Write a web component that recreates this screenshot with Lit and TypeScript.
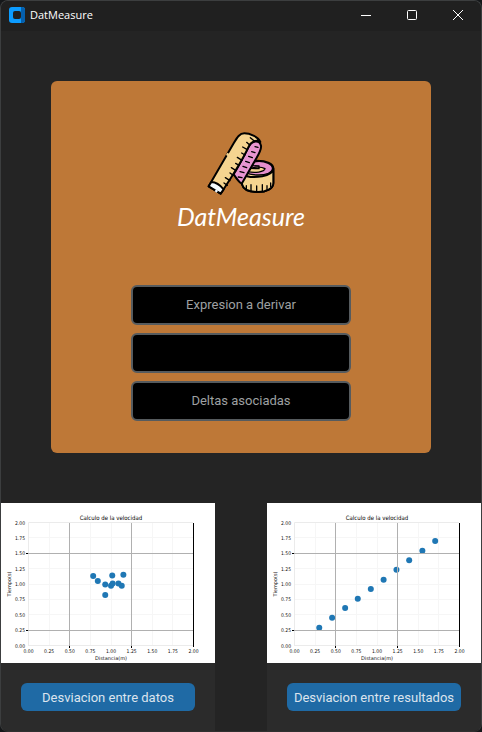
import { LitElement, html, css, svg } from "lit";
import { customElement, property } from "lit/decorators.js";

type Point = [number, number];

const TICKS = [0, 0.25, 0.5, 0.75, 1, 1.25, 1.5, 1.75, 2];

const DATA_POINTS: Point[] = [
  [0.784, 1.13], [0.84, 1.05], [1.015, 1.14], [1.15, 1.15], [0.93, 0.99],
  [1.0, 0.97], [1.02, 1.01], [1.09, 1.01], [1.13, 0.97], [0.93, 0.82],
];

const RESULT_POINTS: Point[] = [
  [0.3, 0.29], [0.456, 0.45], [0.614, 0.61], [0.767, 0.76], [0.925, 0.92],
  [1.08, 1.07], [1.236, 1.23], [1.39, 1.385], [1.55, 1.54], [1.705, 1.7],
];

// Data units to the chart's own drawing units.
const px = (v: number) => 27.5 + v * 82.5;
const py = (v: number) => 142.5 - v * 61.5;

@customElement("scatter-chart")
export class ScatterChart extends LitElement {
  static styles = css`
    :host { display: block; background: #fff; }
    .chart { display: block; width: 100%; height: auto; }
    .label { font: 5px "DejaVu Sans", sans-serif; fill: #111; }
    .tick { font: 5px "DejaVu Sans Condensed", "DejaVu Sans", sans-serif; fill: #111; }
    .title { font: 6px "DejaVu Sans Condensed", "DejaVu Sans", sans-serif; fill: #000; }
    .faint { stroke: #f6f6f6; }
    .grid { stroke: #b0b0b0; }
    .frame { stroke: #ebebeb; }
    .edge { stroke: #000; }
    .dot { fill: #1f77b4; }
  `;

  @property({ attribute: false }) points: Point[] = [];

  render() {
    return html`
      <svg class="chart" viewBox="0 0 214 160" role="img" aria-label="Calculo de la velocidad">
        ${TICKS.slice(1, -1).map((t) => svg`
          <line class="faint" x1=${Math.floor(px(t)) + 0.5} x2=${Math.floor(px(t)) + 0.5} y1="20" y2="142" />
          <line class="faint" x1="28" x2="192" y1=${Math.floor(py(t)) + 0.5} y2=${Math.floor(py(t)) + 0.5} />`)}
        <path class="frame" fill="none" d="M27.5 143V19.5H192M27 142.5H192" />
        ${this.points.map(([x, y]) => svg`<circle class="dot" cx=${px(x)} cy=${py(y)} r="3" />`)}
        <path class="grid" fill="none" d="M68.5 20V143M130.5 20V143M27 50.5H192M27 127.5H192" />
        <path class="edge" fill="none" d="M192.5 20V144M68.5 143v2M130.5 143v2M25 50.5h2M25 127.5h2" />
        <text class="title" x="110" y="17" text-anchor="middle">Calculo de la velocidad</text>
        ${TICKS.map((t) => svg`
          <text class="tick" x=${px(t)} y="150" text-anchor="middle">${t.toFixed(2)}</text>
          <text class="tick" x="24" y=${py(t) + 2} text-anchor="end">${t.toFixed(2)}</text>`)}
        <text class="label" x="110" y="157" text-anchor="middle">Distancia(m)</text>
        <text class="label" transform="translate(10 81) rotate(-90)" text-anchor="middle">Tiempo(s)</text>
      </svg>
    `;
  }
}

@customElement("app-root")
export class AppRoot extends LitElement {
  static styles = css`
    :host {
      display: block;
      min-height: 100vh;
      box-sizing: border-box;
      padding-bottom: 1px;
      background: #151719;
      font-family: Roboto, sans-serif;
    }
    .window {
      box-sizing: border-box;
      min-height: calc(100vh - 1px);
      display: flex;
      flex-direction: column;
      overflow: hidden;
      border: 1px solid #3c3e3f;
      border-bottom-color: #303030;
      border-radius: 8px;
      background: #242424;
    }
    .titlebar {
      box-sizing: border-box;
      display: flex;
      align-items: center;
      height: 30px;
      padding: 0 0 2px 8px;
      background: #202020;
      color: #fff;
    }
    .app-icon { width: 16px; height: 16px; margin-right: 5px; }
    .caption { flex: 1; font: 11px/16px "Open Sans", sans-serif; }
    .control {
      width: 46px;
      height: 28px;
      padding: 0;
      border: 0;
      background: none;
      color: #fff;
      display: grid;
      place-items: center;
    }
    .glyph { width: 12px; height: 12px; fill: none; stroke: currentColor; }
    .hero {
      display: flex;
      flex-direction: column;
      align-items: center;
      margin: 50px;
      padding: 44px 80px 32px;
      border-radius: 6px;
      background: #be7837;
    }
    .logo { width: 80px; height: 75px; display: block; }
    .brand {
      margin: 0 0 52px;
      font: italic 25px/33px Lato, sans-serif;
      color: #fff;
    }
    .fields { display: grid; gap: 8px; width: 100%; }
    .field {
      box-sizing: border-box;
      width: 100%;
      height: 40px;
      padding: 0 2px 2px;
      border: 2px solid #565b5e;
      border-radius: 6px;
      background: #000;
      color: #dce4ee;
      font: 13px Roboto, sans-serif;
      text-align: center;
    }
    .field::placeholder { color: #9ea0a2; opacity: 1; }
    .panels {
      flex: 1;
      display: grid;
      grid-template-columns: 1fr 1fr;
      gap: 52px;
    }
    .panel { background: #2b2b2b; min-width: 0; }
    .actions { padding: 20px; }
    .action {
      display: block;
      width: 100%;
      height: 28px;
      padding: 0;
      border: 0;
      border-radius: 6px;
      background: #1f6aa5;
      color: #dce4ee;
      font: 13px Roboto, sans-serif;
      white-space: nowrap;
    }
  `;

  render() {
    return html`
      <div class="window">
        <header class="titlebar">
          <svg class="app-icon" viewBox="0 0 16 16" aria-hidden="true">
            <rect width="16" height="16" rx="3" fill="#0c9cff" />
            <path d="M12 0h1a3 3 0 0 1 3 3v10a3 3 0 0 1-3 3h-1z" fill="#0560ae" />
            <rect x="4" y="4" width="8" height="8" rx="2" fill="#202020" />
          </svg>
          <span class="caption">DatMeasure</span>
          <button class="control" aria-label="Minimizar">
            <svg class="glyph" viewBox="0 0 12 12"><path d="M1 6.5h10" /></svg>
          </button>
          <button class="control" aria-label="Maximizar">
            <svg class="glyph" viewBox="0 0 12 12"><rect x="1.5" y="1.5" width="9" height="9" rx="1" /></svg>
          </button>
          <button class="control" aria-label="Cerrar">
            <svg class="glyph" viewBox="0 0 12 12"><path d="M1 1l10 10M11 1L1 11" /></svg>
          </button>
        </header>

        <main class="hero">
          <svg class="logo" viewBox="4 0 240 225" aria-hidden="true" stroke="#000" stroke-width="6" stroke-linecap="round" stroke-linejoin="round">
            <path d="M128 125C134 111 152 107 173 107C201 107 221 117 221 130V174C221 191 200 201 174 201C150 201 131 194 127 178Z" fill="#f5d490" />
            <path d="M142 121C152 109 184 105 206 115C223 124 222 137 206 145C188 153 154 151 137 143Z" fill="#e58fcd" stroke-width="4" />
            <path d="M150 132C160 125 185 124 196 131C194 141 165 145 145 140Z" fill="#f5d490" stroke-width="4" />
            <path d="M155 122L178 123V131L151 130" fill="none" stroke-width="4" />
            <path d="M127 146C138 155 163 158 188 154C207 151 219 143 221 131V174C221 191 200 201 174 201C150 201 131 194 127 178Z" fill="#f5d490" />
            <path d="M140 195V182M154 199V179M171 200V183M188 199V179M202 194V182M213 185V174" stroke-width="4" />
            <path d="M102 148C122 116 135 88 147 65C157 45 180 44 184 62C186 73 177 88 170 100L126 176C119 172 112 163 102 148Z" fill="#e895d2" />
            <path d="M175 67L166 65M166 83L156 80M158 98L147 94M149 113L138 109M141 128L130 124M133 143L121 140M127 158L116 156" stroke-width="4" />
            <path d="M27 184L102 55C113 36 120 25 134 25C150 25 175 35 182 51C168 42 154 51 147 65C132 98 109 137 63 206Z" fill="#f5d490" />
            <path d="M27 184L35 171Q55 172 72 193L63 206Z" fill="#f4fbff" />
            <path d="M83 181L73 174M91 167L77 158M101 151L91 144M109 137L95 128M118 121L108 115M127 106L113 97M136 90L126 84M143 74L129 66M150 60L141 52M164 48L152 38" stroke-width="4" />
            <path d="M82 92L86 85" stroke="#f5d490" stroke-width="7" stroke-linecap="butt" />
            <path d="M47 196L53 200" stroke="#f4fbff" stroke-width="7" stroke-linecap="butt" />
          </svg>
          <h1 class="brand">DatMeasure</h1>
          <div class="fields">
            <input class="field" type="text" placeholder="Expresion a derivar" aria-label="Expresion a derivar" />
            <input class="field" type="text" aria-label="Variables" />
            <input class="field" type="text" placeholder="Deltas asociadas" aria-label="Deltas asociadas" />
          </div>
        </main>

        <div class="panels">
          <section class="panel">
            <scatter-chart .points=${DATA_POINTS}></scatter-chart>
            <div class="actions"><button class="action">Desviacion entre datos</button></div>
          </section>
          <section class="panel">
            <scatter-chart .points=${RESULT_POINTS}></scatter-chart>
            <div class="actions"><button class="action">Desviacion entre resultados</button></div>
          </section>
        </div>
      </div>
    `;
  }
}
